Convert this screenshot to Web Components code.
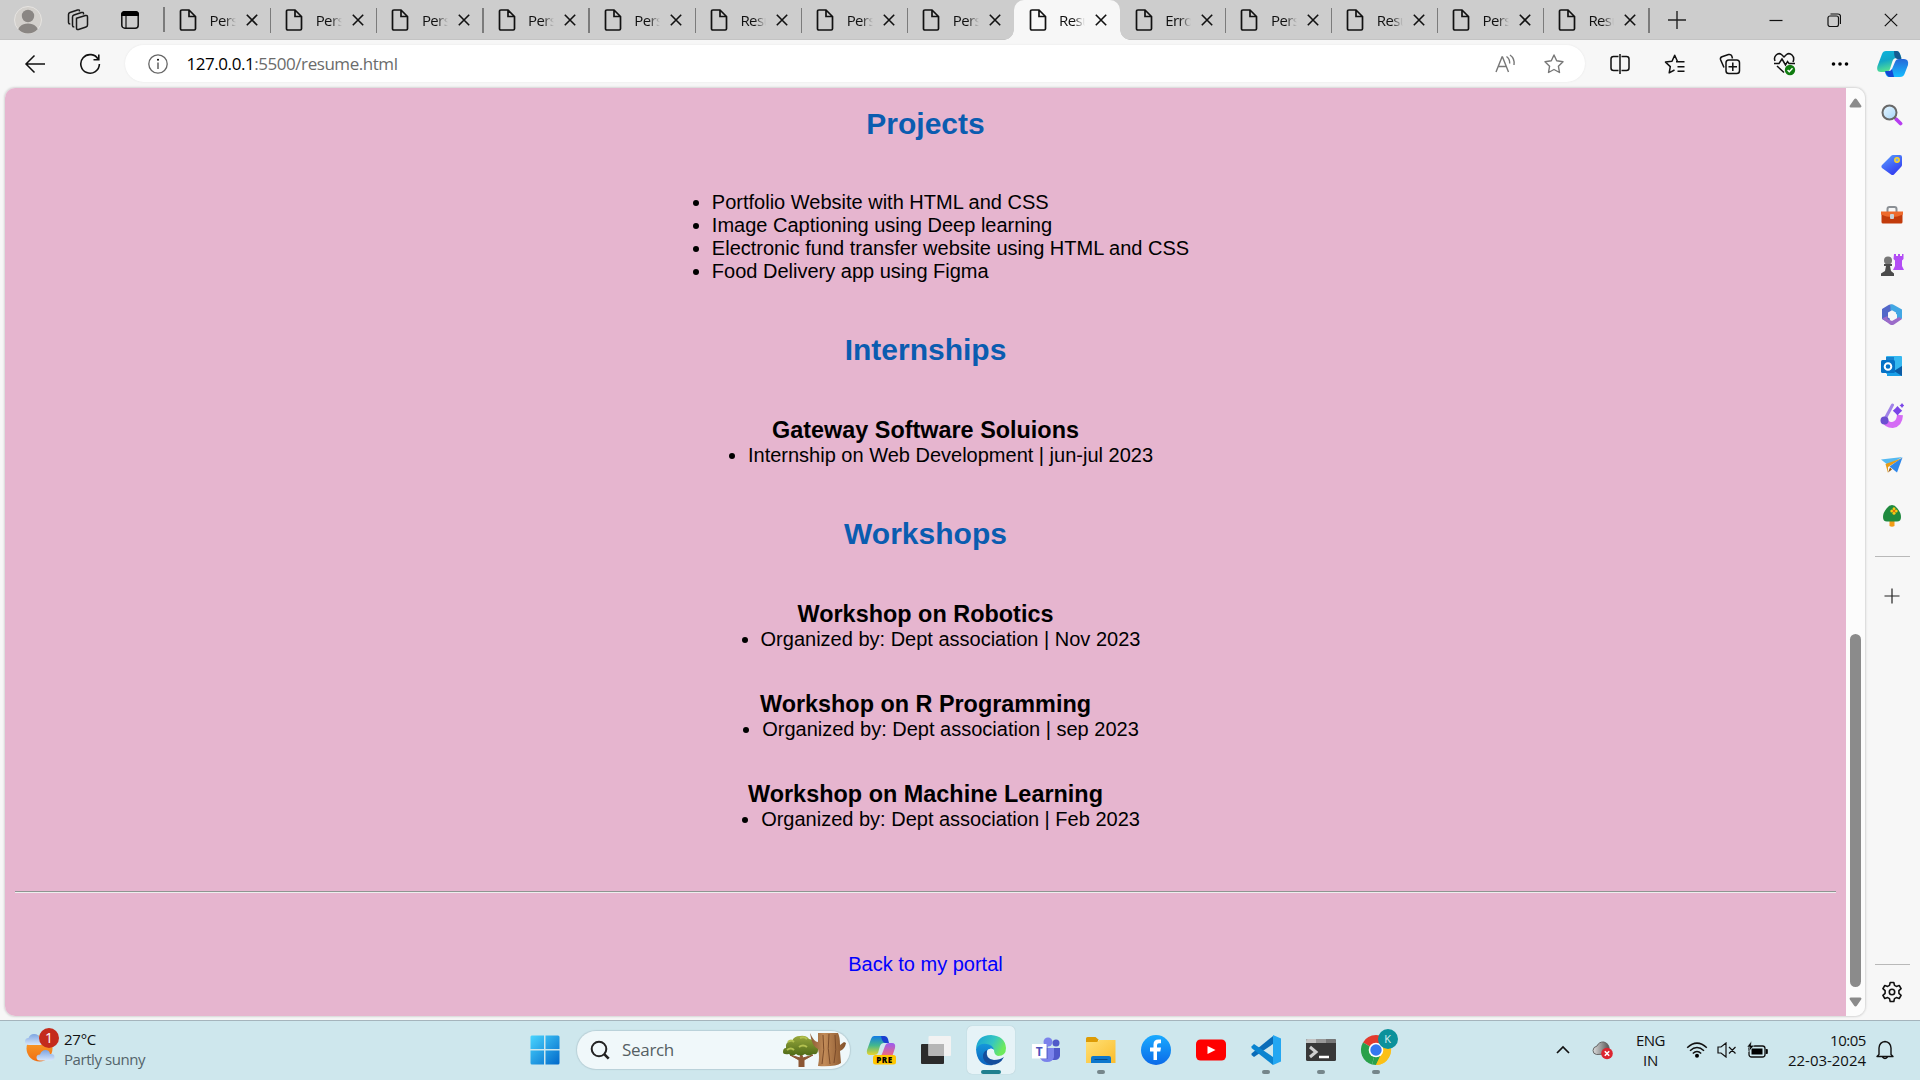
<!DOCTYPE html>
<html lang="en">
<head>
<meta charset="utf-8">
<title>Resume</title>
<style>
html,body{margin:0;height:100%;overflow:hidden}
body{font-family:"Open Sans","Noto Sans",sans-serif;background:#f7f7f7}
</style>
</head>
<body>
<desktop-screen></desktop-screen>
<script>
const ICONS = {
doc:[20,22,'<path d="M4 1.5h7.5L18 8v12.2c0 .8-.6 1.3-1.3 1.3H4.300c-.8 0-1.300-.6-1.300-1.300V2.800C3 2 3.500 1.500 4.300 1.500M11.500 1.500V8H18" transform="translate(-.5 -.5)" fill="none" stroke="#111" stroke-width="1.700"/>'],
x:[12,12,'<path d="M.8.8l10.400 10.400M11.200.8.8 11.200" stroke="#111" stroke-width="1.600"/>'],
person:[28,28,'<defs><clipPath id="c"><circle cx="14" cy="14" r="13.500"/></clipPath></defs><circle cx="14" cy="14" r="13.500" fill="#d3d0cc" stroke="#e6e4e1"/><g clip-path="url(#c)" fill="#8a8683"><circle cx="14" cy="10" r="6.200"/><path d="M3.500 28c0-7 4-10.500 10.500-10.500S24.500 21 24.500 28z"/></g>'],
spaces:[24,24,'<g fill="none" stroke="#1a1a1a" stroke-width="1.500" stroke-linejoin="round"><path d="M10.500 10.200 19.500 7.500q2-.5 2 1.500v8q0 1.500-1.500 2l-7.500 2.500q-2 .5-2-1.500z"/><path d="M17.500 6.500V5.500q0-1.500-2-1L8 7Q6.500 7.500 6.500 9v8.500q0 1.500 1.800 1.500"/><path d="M13.500 3.500V3q0-1.500-2-1L4 4.500Q2.500 5 2.500 6.500v8q0 1.500 1.800 1.500"/></g>'],
tabact:[20,20,'<rect x="1.800" y="1.800" width="16.400" height="16.400" rx="3" fill="none" stroke="#111" stroke-width="1.500"/><path d="M1 6V4.500Q1 1 4.500 1h11Q19 1 19 4.500V6z"/><path d="M6 6v12" stroke="#111" stroke-width="1.200"/>'],
back:[22,20,'<path d="M21 10H2M10.500 1.500 2 10l8.500 8.500" fill="none" stroke="#111" stroke-width="1.500"/>'],
reload:[22,22,'<path d="M19.300 6.500A9.300 9.300 0 1 0 20.400 11M19.800 1.500v5.300h-5.300" fill="none" stroke="#111" stroke-width="1.600"/>'],
info:[22,22,'<circle cx="11" cy="11" r="9.200" fill="none" stroke="#666" stroke-width="1.300"/><path d="M11 9.500V16" stroke="#555" stroke-width="1.400"/><circle cx="11" cy="6.700" r="1"/>'],
read:[22,20,'<g fill="none" stroke="#777" stroke-width="1.400"><path d="M2 18 8 3h.5l6 15M4.200 12.500h8M12.500 2.500q3.500 2.500 3.200 7M16 1q5 3.500 4 10"/></g>'],
star:[22,21,'<path d="m11 2 2.700 5.800 6.300.9-4.600 4.500 1.100 6.300L11 16.500l-5.500 3 1.100-6.300L2 8.700l6.300-.9z" fill="none" stroke="#777" stroke-width="1.400" stroke-linejoin="round"/>'],
split:[20,22,'<g fill="none" stroke="#111" stroke-width="1.500"><path d="M8.500 3.500H3.500q-2.500 0-2.500 2.500v9q0 2.500 2.500 2.500h5M11.500 3.500h5Q19 3.500 19 6v9q0 2.500-2.500 2.500h-5M10 1v20"/></g>'],
favs:[22,22,'<path d="M10.500 17 5.200 19.800l1.100-6.200L1.500 9.100 8 8.200l2.700-6 2.700 6M20.500 8.700H12M20.500 13.700h-7M20.500 18.200h-7" fill="none" stroke="#111" stroke-width="1.500" stroke-linejoin="round"/>'],
coll:[22,22,'<g fill="none" stroke="#111" stroke-width="1.500"><path d="M5 14.500 1.500 6.500Q1 4.500 3 3.700L9.500 1.500Q12 1 12.800 3L13.500 5.500"/><rect x="7" y="7" width="13.500" height="13.500" rx="2.800"/><path d="M13.800 9.500v8.500M9.500 13.800h8.500"/></g>'],
heart:[24,24,'<path d="M2 9C0 4 5 0 8.500 2.500L11 5l2.500-2.500C17 0 22.500 4 20 10M1 11.500h5L9 7l3.500 6 2-3.500 1.500 2h6M4 14l7 6.500" fill="none" stroke="#111" stroke-width="1.500"/><circle cx="17" cy="18" r="5.200" fill="#107c10"/><path d="m14.600 18 1.700 1.800 3.200-3.600" fill="none" stroke="#fff" stroke-width="1.400"/>'],
dots:[18,6,'<circle cx="2.500" cy="3" r="1.800"/><circle cx="9" cy="3" r="1.800"/><circle cx="15.500" cy="3" r="1.800"/>'],
copilot:[32,28,'<defs><linearGradient id="a" x2=".3" y2="1"><stop stop-color="#0cb5dd"/><stop offset=".5" stop-color="#12a6c8"/><stop offset="1" stop-color="#58e490"/></linearGradient><linearGradient id="b" x2="0" y2="1"><stop stop-color="#2668d8"/><stop offset="1" stop-color="#17bdff"/></linearGradient></defs><path d="M9 1h10q3 0 4 3l1.500 4h-5q-3 0-4 3l-2.500 8q-1 3-4 3H4q-5 0-3.500-6L5 4q1-3 4-3" fill="url(#a)"/><path d="M17 1h3q2 0 3 3l1.500 5h-4Q17 9 17 1" fill="#155b91"/><path d="M23 27H12q-3 0-4-5h3q3 0 4-3l3-7q1-3 4-3h5q5 0 4 6l-3.500 9q-1 3-4.500 3" fill="url(#b)"/><path d="M8 21h4q2 0 3-2l2 8h-4q-3 0-5-6" fill="#1449d5"/>'],
min:[14,12,'<path d="M.5 6.500h13" stroke="#111" stroke-width="1.200"/>'],
max:[14,14,'<rect x="1" y="3" width="10.500" height="10.500" rx="2" fill="none" stroke="#111" stroke-width="1.200"/><path d="M3.500 1H11q2.500 0 2.500 2.500V11" fill="none" stroke="#111" stroke-width="1.200"/>'],
wx:[14,14,'<path d="m.8.800 12.400 12.400M13.200.8.8 13.200" stroke="#111" stroke-width="1.200"/>'],
plus:[18,18,'<path d="M9 0v18M0 9h18" stroke="#222" stroke-width="1.400"/>'],
plus2:[16,16,'<path d="M8 .5v15M.5 8h15" stroke="#222" stroke-width="1.200"/>'],
mag:[22,22,'<defs><linearGradient id="a" x2="1" y2="1"><stop stop-color="#e8f6ff"/><stop offset="1" stop-color="#a5d5f8"/></linearGradient></defs><path d="m13 13 3 3" stroke="#777" stroke-width="2.500"/><path d="m15.500 15.500 4 4" stroke="#b63df0" stroke-width="3.800" stroke-linecap="round"/><circle cx="8.500" cy="8.500" r="7" fill="url(#a)" stroke="#686868" stroke-width="2"/>'],
tag:[22,22,'<defs><linearGradient id="a" x2=".6" y2="1"><stop stop-color="#5aa2ff"/><stop offset="1" stop-color="#333cf0"/></linearGradient></defs><path d="M12 1h7q2 0 2 2v8q0 1-1 2l-7 7.500q-1.500 1.200-3 0L1 14q-1.200-1.500 0-3l9-9q1-1 2-1" fill="url(#a)"/><circle cx="16" cy="6" r="2.200" fill="#7aa9ee" stroke="#ffd51f" stroke-width="1.500"/>'],
box:[24,20,'<path d="M7.500 7V4q0-2 2-2h5q2 0 2 2v3" fill="none" stroke="#8a8f94" stroke-width="2"/><rect x="1.500" y="7" width="21" height="11.500" rx="1.500" fill="#c23b0b"/><path d="M1 6.500h22v3q-11 5-22 0z" fill="#ee6a2c"/><rect x="10" y="9" width="4" height="5" rx="1" fill="#c7d2d8"/>'],
chess:[24,24,'<path d="M14 1h2v2h2V1h2v2h2V1h1.500v5L22 7.500V13l2 4H13l2-4V7.500L13.500 6z" fill="#b34df5"/><circle cx="8" cy="7.500" r="4" fill="#777"/><path d="M4 11h8v2h-2l1 5 3 2.500V23H1v-2.500L5 18l1-5H4z" fill="#4b4b4b"/>'],
m365:[22,24,'<path d="M8 1.800 1 6v10l5 3 3-2.500V9l7-4-4-2.800Q10 .8 8 1.800" fill="#5267c9"/><path d="M9 2q2-1.500 4 0l8 4.500v9l-5 3v-7L9.500 7.500V4" fill="#42a7e4"/><path d="M1 15.500 6.500 13v3l4.500 2 7-4 3 2-8 5.500q-2 1.200-4 0z" fill="#9b6bc9"/><path d="m7 9.500 4-2.200 4 2.200v5L11 17l-4-2.500z" fill="#f7f7f7"/>'],
outlook:[22,22,'<rect x="5" y="1" width="16" height="18" rx="1" fill="#35b8f1"/><path d="M5 2h8v7H5z" fill="#1582cf"/><path d="m21 11-7 4.500L6 12v9h15z" fill="#1aa0e8"/><path d="m21 11-8 5 8 5z" fill="#0b5ba5"/><rect x="0" y="5" width="14" height="13" rx="1.500" fill="#0672c6"/><circle cx="7" cy="11.500" r="3.300" fill="none" stroke="#fff" stroke-width="2"/>'],
paint:[24,26,'<path d="M4.500 17q2 5 8 5 7-1 7.500-10" fill="none" stroke="#d56cf5" stroke-width="6"/><path d="m12.500 2-7 13" stroke="#a183e8" stroke-width="3" stroke-linecap="round"/><circle cx="4.500" cy="17.500" r="4" fill="#6c4fd0"/><path d="m17.500 3 2.200 2.500 2.500 2.200-2.500 2.200-2.200 2.500-2.200-2.500-2.500-2.200 2.500-2.200zM22 0l1 1.500 1.500 1L23 3.500 22 5l-1-1.500-1.500-1 1.500-1z" fill="#7a45e8"/>'],
plane:[22,18,'<path d="M0 2.500 21.500 0 7 8z" fill="#54b9f1"/><path d="M4.500 7 21.500 1 7 10v6z" fill="#e79c16"/><path d="m8.500 9.500 13-9L16 15.500z" fill="#2e87ea"/><path d="m7 15.500 2-5 2 2z" fill="#9a5c12"/>'],
tree:[20,24,'<path d="M7.500 15h5v7q-2.500 1.500-5 0z" fill="#f29c16"/><path d="M10 1Q13 1 15 4q4 4.500 4 9 0 4.500-4 4.500H5q-4 0-4-4.500Q1 8.500 5 4 7 1 10 1" fill="#1f8a3e"/><g fill="#fcc814"><circle cx="12" cy="4.800" r="1.500"/><circle cx="12" cy="9.200" r="1.500"/><circle cx="9.800" cy="7" r="1.500"/><circle cx="14.200" cy="7" r="1.500"/></g><circle cx="12" cy="7" r="1.300" fill="#e0700f"/>'],
gear:[22,22,'<g fill="none" stroke="#111" stroke-width="1.600" stroke-linejoin="round"><path d="M9.200 1.500h3.600l.7 2.900 1.800 1 2.900-.9 1.900 3.200-2.200 2v2.600l2.200 2-1.900 3.200-2.900-.9-1.800 1-.7 2.900H9.200l-.7-2.900-1.800-1-2.900.9-1.900-3.200 2.200-2V9.700l-2.200-2 1.900-3.200 2.900.9 1.800-1z"/><circle cx="11" cy="11" r="2.700"/></g>'],
up:[13,10,'<path d="M6.500.5q.8 0 1.300.8l4.500 6.500q.7 1.700-1 1.700H1.700q-1.700 0-1-1.700l4.500-6.500q.5-.8 1.300-.8" fill="#8b8b8b"/>'],
down:[13,10,'<path d="M6.500 9.500q.8 0 1.300-.8l4.500-6.500q.7-1.700-1-1.700H1.700q-1.700 0-1 1.700l4.500 6.500q.5.800 1.300.8" fill="#8b8b8b"/>'],
weather:[32,32,'<defs><linearGradient id="a" x2="0" y2="1"><stop stop-color="#fba72d"/><stop offset="1" stop-color="#f06f14"/></linearGradient><linearGradient id="b" x2="0" y2="1"><stop stop-color="#7da5e2"/><stop offset="1" stop-color="#d7e6fb"/></linearGradient></defs><circle cx="15.500" cy="16.500" r="13" fill="url(#a)"/><path d="M5 13Q1 13 1 9.500 1 6 4.500 6 6 2 10 2q5 0 6 5 3 0 3 3t-3 3z" fill="url(#b)"/><path d="M16 28.500q-3.500 0-3.500-3t3.500-3q1.500-4.500 5.500-4.500T26 22q4.500-.5 4.500 3t-4 3.500z" fill="url(#b)"/>'],
win:[30,30,'<defs><linearGradient id="a" gradientUnits="userSpaceOnUse" x2="30" y2="30"><stop stop-color="#4ad6ff"/><stop offset="1" stop-color="#0067c9"/></linearGradient></defs><path d="M1.500.5H14V14H.5V1.500zM15.500.5H28q1.500 0 1.500 1.500v12h-14zM.5 15.500H14v14H2Q.5 29.500.5 28zM15.500 15.500h14V28q0 1.500-1.500 1.500H15.500z" fill="url(#a)"/>'],
search:[20,20,'<circle cx="9" cy="9" r="7.300" fill="none" stroke="#222" stroke-width="2"/><path d="m14.200 14.200 4.500 4.500" stroke="#222" stroke-width="2.600"/>'],
trees:[64,34,'<defs><linearGradient id="a" x2="1" y2="0"><stop stop-color="#8a5a34"/><stop offset=".4" stop-color="#c28b58"/><stop offset="1" stop-color="#825029"/></linearGradient><linearGradient id="b" x2="0" y2="1"><stop stop-color="#98a83c"/><stop offset="1" stop-color="#4e6a18"/></linearGradient></defs><path d="m8 22 9 5v7h5v-7l9-5-10 3-2-5-1 5z" fill="#8c5735" stroke="#8c5735"/><path d="M1 19q0-4 3-4-1-7 6-7 2-5 8-5 6-1 9 3 5 0 6 6 4 1 3 5 0 5-5 4-4 3-8 0-5 3-9 0-4 3-7 0-6 1-6-2" fill="url(#b)"/><path d="M6 9q3-3 6 0M18 5q4-2 7 1M5 17q4-3 7 0M17 14q4-3 8 0" stroke="#b3c150" stroke-width="2" fill="none"/><path d="M36 0h20q2 4 2 12l4-3 2 1q-1 6-6 8l1 12q-5 4-23 3 2-10 0-17-6-2-8-16 4 9 8 9z" fill="url(#a)"/><path d="M41 2q2 15-1 29M47 1q-2 14 1 30M53 2q2 15-1 28" stroke="#7c4c2a" fill="none"/>'],
pre:[32,32,'<defs><linearGradient id="a" x2="0" y2="1"><stop stop-color="#127be5"/><stop offset=".5" stop-color="#44b88d"/><stop offset="1" stop-color="#ead52a"/></linearGradient><linearGradient id="b" x2="0" y2="1"><stop stop-color="#9a5cf2"/><stop offset="1" stop-color="#fa6a70"/></linearGradient></defs><path d="M9 2h9q3 0 3 3l1 4h-3q-3 0-4 3l-2 7q-1 2-4 2H5q-4 0-3-5L6 5q1-3 3-3" fill="url(#a)"/><path d="M16 2h3q3 0 4 3l1 4h-4q-3-1-4-7" fill="#1a3fd0"/><path d="M20 9h7q4 0 3 5l-3 9H14q2 0 3-3l3-8q1-3 4-3" fill="url(#b)"/><rect x="8" y="21" width="23" height="9.500" rx="2.500" fill="#ffc600"/><text x="19.500" y="28.800" text-anchor="middle" font-size="8" letter-spacing=".5" font-family="Open Sans" font-weight="800">PRE</text>'],
task:[32,30,'<rect x="1" y="9" width="23" height="20" rx="1" fill="#2b2b2b"/><rect x="8.500" y="1" width="22.500" height="20" rx="1" fill="#f2f2f2"/><path d="M8.500 9H24v12H8.500z" fill="#b6b6b6"/>'],
edge:[32,32,'<defs><linearGradient id="a" x2="1" y2=".4"><stop stop-color="#159fd8"/><stop offset=".6" stop-color="#35c6c1"/><stop offset="1" stop-color="#6dea5c"/></linearGradient><linearGradient id="b" x2="0" y2="1"><stop stop-color="#1597da"/><stop offset="1" stop-color="#0a62bf"/></linearGradient></defs><path d="M1 15Q2 1 16 1q14 1 15 13 0 8-8 8-6 0-5-3 2-7-5-8Q6 10 1 15" fill="url(#a)"/><path d="M1 15q3-6 11-5 6 1 7 6-4-3-7 1-2 6 4 11l2 3Q2 33 1 15" fill="url(#b)"/><path d="M12 16q-2 9 7 10 6 0 10-3-4 8-13 8-9-3-8-10 1-4 4-5" fill="#134d9c"/><path d="M12.500 16q4-3 6.500 0 0 5 4 6-9 2-10.500-6" fill="#e9f6fa"/>'],
teams:[30,28,'<circle cx="17" cy="6" r="4.500" fill="#7b83eb"/><circle cx="25" cy="7" r="3.500" fill="#5059c9"/><path d="M21 12h8v8q-1 4-5 4h-3z" fill="#5059c9"/><path d="M9 12h14v9q-1 5-7 5t-7-5z" fill="#7b83eb"/><path d="M9 10h8v13H9z" fill="#4b53bc" opacity=".5"/><rect x="1" y="8" width="14.500" height="14.500" fill="#fff"/><text x="8.200" y="19.500" text-anchor="middle" font-size="12" font-weight="700" font-family="Open Sans" fill="#4b53bc">T</text>'],
folder:[32,28,'<defs><linearGradient id="a" x2="1" y2="1"><stop stop-color="#ffe076"/><stop offset="1" stop-color="#fbbd2c"/></linearGradient></defs><path d="M1 2.500Q1 1 2.500 1h8L14 4h-1v3H1z" fill="#dd9b05"/><path d="M1 6h11l2-2h16.500v23H1z" fill="url(#a)"/><path d="M6 27v-5q0-2 2-2h16q2 0 2 2v5z" fill="#0d77cc"/><path d="M9.500 23.500h13" stroke="#064b8b"/>'],
fb:[32,32,'<defs><linearGradient id="a" x2="0" y2="1"><stop stop-color="#19aaff"/><stop offset="1" stop-color="#0b6ae8"/></linearGradient></defs><circle cx="16" cy="16" r="15" fill="url(#a)"/><path d="M13.500 26V17.500H10v-4h3.500v-3Q13.500 5.500 18.500 5.500H21v3.700h-2q-2 0-2 2v2.300h4l-.7 4H17V26z" fill="#fff"/>'],
yt:[32,24,'<rect x="1" y="1.500" width="30" height="21" rx="4.500" fill="#f00"/><path d="m12.500 8 8 4-8 4z" fill="#fff"/>'],
code:[32,32,'<path d="M1.500 19.500 23 2v8L4 23 1.500 21z" fill="#0a6cb8"/><path d="M1.500 12.500 4 10l19 13v8L1.500 14z" fill="#0a84d0"/><path d="m23 1 8 3.500v23L23 31z" fill="#23a7f2"/>'],
term:[32,24,'<rect x="1" y="1" width="30" height="22" rx="1.500" fill="#383838"/><path d="M1 5V2.500Q1 1 2.500 1H11v4z" fill="#c3c3c3"/><path d="M11 1h10v4H11z" fill="#999"/><path d="M21 1h8.500Q31 1 31 2.500V5H21z" fill="#777"/><path d="m5 9 6 5-6 5" fill="none" stroke="#d0d0d0" stroke-width="3"/><path d="M14 19h10" stroke="#fff" stroke-width="2.500"/>'],
chrome:[32,32,'<path d="M16 16 3 8.500A15 15 0 0 1 29 8.500z" fill="#e33b2e"/><path d="M16 16 29 8.500A15 15 0 0 1 16 31z" fill="#fbc016"/><path d="M16 16v0l-4 14.500A15 15 0 0 1 3 8.500z" fill="#28a14b"/><path d="m16 16 5 5-5 10-4-.5z" fill="#28a14b"/><path d="m16 31 5.500-12L29 9q5 12-5 19.700Q20 31 16 31" fill="#fbc016"/><circle cx="16" cy="16" r="7.300" fill="#fff"/><circle cx="16" cy="16" r="5.700" fill="#3478f0"/>'],
chev:[14,10,'<path d="m1 8 6-6 6 6" fill="none" stroke="#111" stroke-width="1.700"/>'],
cloud:[22,20,'<defs><linearGradient id="a" x2="1" y2="0"><stop stop-color="#ddd"/><stop offset="1" stop-color="#555"/></linearGradient></defs><path d="M4.500 14.500Q1 14 1 10.500 1 7 5 6q2-4.500 7-4 4 1 5 5v7z" fill="url(#a)" stroke="#666"/><circle cx="15" cy="13.500" r="5.800" fill="#dc2530"/><path d="m12.800 11.300 4.400 4.400M17.200 11.300l-4.400 4.400" stroke="#fff" stroke-width="1.600"/>'],
wifi:[22,18,'<g fill="none" stroke="#111" stroke-width="1.500"><path d="M1.200 6.700Q11-2.500 20.800 6.700M4 9.700q7-6.500 14 0M6.800 12.500q4.200-4 8.400 0"/></g><circle cx="11" cy="14.800" r="2"/>'],
vol:[20,16,'<path d="M1 5h3l5-4v14l-5-4H1zM12 5l6.500 6.500M18.500 5 12 11.500" fill="none" stroke="#111" stroke-width="1.200"/>'],
bat:[22,18,'<rect x="2" y="5" width="16" height="11" rx="2.500" fill="none" stroke="#111" stroke-width="1.300"/><path d="M4.500 7.500h11v6h-11z"/><path d="M18.800 8.500h1.500v4h-1.500" stroke="#111"/><path d="M4.500 0 0 6h3l-1.500 5L7 4.500H4z" stroke="#cee7ed" stroke-width=".5"/>'],
bell:[18,20,'<path d="M3 14.500V8Q3.500 2 9 1.500 14.500 2 15 8v6.500l2 2H1zM6.500 17q2.500 3 5 0" fill="none" stroke="#111" stroke-width="1.400" stroke-linejoin="round"/>']
};

class SvgIcon extends HTMLElement {
  connectedCallback() {
    const [w, h, body] = ICONS[this.getAttribute('name')];
    const W = +(this.getAttribute('w') || w), H = h * W / w;
    this.attachShadow({mode:'open'}).innerHTML =
      `<style>:host{display:block;flex:none;width:${W}px;height:${H}px}svg{display:block}</style><svg width="${W}" height="${H}" viewBox="0 0 ${w} ${h}">${body}</svg>`;
  }
}

/* A line of text whose tracking is adjusted so that it fills a given width. */
class FitText extends HTMLElement {
  connectedCallback() {
    this.attachShadow({mode:'open'}).innerHTML =
      `<style>:host{display:block;white-space:nowrap}span{display:inline-block}</style><span><slot></slot></span>`;
    const s = this.shadowRoot.querySelector('span');
    const target = +this.getAttribute('w'), n = this.textContent.length;
    if (target) s.style.letterSpacing = ((target - s.getBoundingClientRect().width) / n) + 'px';
  }
}

class BrowserTab extends HTMLElement {
  connectedCallback() {
    this.attachShadow({mode:'open'}).innerHTML = `<style>
    :host{display:flex;box-sizing:border-box;height:40px;align-items:center;padding-left:13.500px;position:relative;font-size:15px;color:#111}
    :host([active]){background:#f7f7f7;border-radius:10px 10px 0 0}
    :host([active])::before,:host([active])::after{content:"";position:absolute;bottom:0;width:10px;height:10px}
    :host([active])::before{left:-10px;background:radial-gradient(circle at 0 0,transparent 9.500px,#f7f7f7 10px)}
    :host([active])::after{right:-10px;background:radial-gradient(circle at 100% 0,transparent 9.500px,#f7f7f7 10px)}
    .t{width:26px;overflow:hidden;white-space:nowrap;margin:0 10px 0 11.500px;letter-spacing:-.6px;line-height:22px;-webkit-mask-image:linear-gradient(90deg,#000 55%,transparent 100%)}
    i{position:absolute;right:-.500px;top:8px;width:1.300px;height:25px;background:#7b7b7b}
    </style><svg-icon name="doc"></svg-icon><div class="t"><slot></slot></div><svg-icon name="x"></svg-icon>${this.hasAttribute('sep')?'<i></i>':''}`;
  }
}

class TabStrip extends HTMLElement {
  connectedCallback() {
    const t = ['Personal','Personal','Personal','Personal','Personal','Resume','Personal','Personal','Resume','Error','Personal','Resume','Personal','Resume'];
    this.attachShadow({mode:'open'}).innerHTML = `<style>
    :host{display:flex;height:40px;background:#cdcdcd;align-items:center;box-shadow:inset 0 -1px #c3c3c3}
    .lead{display:flex;align-items:center;width:164.500px;box-sizing:border-box;padding-left:14px;position:relative}
    .lead i{position:absolute;right:0;top:1px;width:1.300px;height:25px;background:#7b7b7b}
    .a{width:106.200px}.b{width:105.800px}.win{display:flex;align-items:center;margin-left:auto;padding-right:22px;gap:43.500px}
    </style><div class="lead"><svg-icon name="person"></svg-icon><svg-icon name="spaces" style="margin-left:24px"></svg-icon><svg-icon name="tabact" style="margin-left:30px"></svg-icon><i></i></div>`
    + t.map((s,i)=>`<browser-tab class="${i<9?'a':'b'}" ${i===8?'active':''} ${i===7||i===8?'':'sep'}>${s}</browser-tab>`).join('')
    + `<svg-icon name="plus" style="margin-left:18.500px"></svg-icon><div class="win"><svg-icon name="min"></svg-icon><svg-icon name="max"></svg-icon><svg-icon name="wx"></svg-icon></div>`;
  }
}

class AddressRow extends HTMLElement {
  connectedCallback() {
    this.attachShadow({mode:'open'}).innerHTML = `<style>
    :host{display:flex;height:48px;background:#f7f7f7;align-items:center;box-sizing:border-box;padding:0 0 0 24px}
    .bar{display:flex;flex:none;align-items:center;box-sizing:border-box;width:1460px;height:37px;border-radius:19px;background:#fff;margin:0 0 1px 24px;padding:0 20px 0 21.500px;box-shadow:0 0 2px #e4e4e4}
    fit-text{font-size:17px;margin:-1px 0 0 18px;color:#6b6b6b}b{font-weight:400;color:#000}
    .r{display:grid;grid-template-columns:repeat(5,55px) 52px;place-items:center;margin-left:7px}
    </style><svg-icon name="back"></svg-icon><svg-icon name="reload" style="margin-left:33px"></svg-icon>
    <div class="bar"><svg-icon name="info"></svg-icon><fit-text w="211"><b>127.0.0.1</b>:5500/resume.html</fit-text><svg-icon name="read" style="margin-left:auto"></svg-icon><svg-icon name="star" style="margin-left:27px"></svg-icon></div>
    <div class="r"><svg-icon name="split"></svg-icon><svg-icon name="favs"></svg-icon><svg-icon name="coll"></svg-icon><svg-icon name="heart"></svg-icon><svg-icon name="dots"></svg-icon><svg-icon name="copilot"></svg-icon></div>`;
  }
}

class ResumePage extends HTMLElement {
  connectedCallback() {
    this.attachShadow({mode:'open'}).innerHTML = `<style>
    :host{display:flex;flex-direction:column;align-items:center;background:#e6b5cf;width:1841px;height:928px;font-family:"Liberation Sans",Arial,sans-serif;color:#000;font-size:20px;line-height:23px}
    h2{margin:0;font-size:30px;line-height:34px;color:#0a5cb0}
    h3{margin:0;font-size:23.400px;line-height:27px}
    ul{margin:0;padding:0 0 0 50px}
    hr{box-sizing:border-box;width:1821px;height:2px;margin:60px 0 0;border:0;border-top:1px solid #8f9492;border-bottom:1px solid #eeeeee}
    a{color:#00f;margin-top:60px}
    </style>
    <h2 style="margin-top:19px">Projects</h2>
    <ul style="margin-top:50px"><li>Portfolio Website with HTML and CSS</li><li>Image Captioning using Deep learning</li><li>Electronic fund transfer website using HTML and CSS</li><li>Food Delivery app using Figma</li></ul>
    <h2 style="margin-top:50px">Internships</h2>
    <h3 style="margin-top:50px"><fit-text w="307">Gateway Software Soluions</fit-text></h3><ul><li>Internship on Web Development | jun-jul 2023</li></ul>
    <h2 style="margin-top:50px">Workshops</h2>
    <h3 style="margin-top:50px"><fit-text w="256">Workshop on Robotics</fit-text></h3><ul><li>Organized by: Dept association | Nov 2023</li></ul>
    <h3 style="margin-top:40px"><fit-text w="331">Workshop on R Programming</fit-text></h3><ul><li>Organized by: Dept association | sep 2023</li></ul>
    <h3 style="margin-top:40px"><fit-text w="355">Workshop on Machine Learning</fit-text></h3><ul><li>Organized by: Dept association | Feb 2023</li></ul>
    <hr><a>Back to my portal</a>`;
  }
}

class ScrollBar extends HTMLElement {
  connectedCallback() {
    this.attachShadow({mode:'open'}).innerHTML = `<style>
    :host{display:flex;flex-direction:column;align-items:center;box-sizing:border-box;width:19px;height:928px;background:#fcfcfc;padding:10px 0 9px}
    i{width:11px;height:353px;border-radius:6px;background:#8b8b8b;margin:auto 0 10px}
    </style><svg-icon name="up"></svg-icon><i></i><svg-icon name="down"></svg-icon>`;
  }
}

class SideBar extends HTMLElement {
  connectedCallback() {
    this.attachShadow({mode:'open'}).innerHTML = `<style>
    :host{display:flex;flex-direction:column;align-items:center;box-sizing:border-box;width:55px;height:932px;padding-top:2px}
    .c{height:50.100px;display:grid;place-items:center;flex:none;padding-right:2px}
    i{width:35px;height:1px;background:#b9b9b9;flex:none}
    </style>` + ['mag','tag','box','chess','m365','outlook','paint','plane','tree'].map(n=>`<div class="c"><svg-icon name="${n}"></svg-icon></div>`).join('')
    + `<i style="margin-top:15px"></i><svg-icon name="plus2" style="margin:31px 2px 0 0"></svg-icon><i style="margin:auto 0 16px"></i><svg-icon name="gear" style="margin:0 1px 17px 0"></svg-icon>`;
  }
}

class TaskApp extends HTMLElement {
  connectedCallback() {
    const st = this.getAttribute('state');
    this.attachShadow({mode:'open'}).innerHTML = `<style>
    :host{display:grid;place-items:center;width:55px;height:48px;position:relative;flex:none}
    .bg{position:absolute;left:3.500px;top:0;width:48px;height:48px;border-radius:5px;background:#e6f3f7;box-shadow:0 0 1px #9fb8bf}
    svg-icon{position:relative}.bar{position:absolute;bottom:0;left:50%;transform:translateX(-50%);height:4px;border-radius:2px}
    .run{width:8px;background:#75868b}.active{width:20px;background:#20808f}
    .k{position:absolute;left:29px;top:3px;width:20px;height:20px;border-radius:50%;background:#0b919b;color:#d9f0f2;font-size:11px;line-height:20px;text-align:center}
    </style>${st==='active'?'<div class="bg"></div>':''}<svg-icon name="${this.getAttribute('icon')}"></svg-icon>${st?`<div class="bar ${st}"></div>`:''}${this.hasAttribute('badge')?`<div class="k">${this.getAttribute('badge')}</div>`:''}`;
  }
}

class TaskBar extends HTMLElement {
  connectedCallback() {
    this.attachShadow({mode:'open'}).innerHTML = `<style>
    :host{display:flex;align-items:flex-start;box-sizing:border-box;height:60px;border-top:1px solid #a5b4bc;background:#cee7ed;padding-top:5px;color:#111;font-size:15px;line-height:20px}
    .w{display:flex;width:517px;height:48px}.wi{position:relative;margin-left:24px;padding-top:6px}
    .wi b{position:absolute;left:15px;top:2px;width:20px;height:20px;border-radius:50%;background:#c42b1c;color:#fff;font:14px/20px "Open Sans";text-align:center}
    .wt{margin-left:8px;padding-top:3px}.wt fit-text+fit-text{color:#53636a}
    .s{display:flex;align-items:center;box-sizing:border-box;width:273px;height:38px;margin:5px 3.500px 0 5px;border-radius:19px;background:#f0f8fa;box-shadow:0 0 1px 1px #b9d0d7;padding:0 4px 0 13px;font-size:17px;color:#555f63}
    .tray{display:flex;align-items:center;height:48px;margin-left:auto;padding-right:26px}.c{text-align:center}.d{display:flex;flex-direction:column;align-items:flex-end}
    .c,.d{margin-top:-1px}
    </style>
    <div class="w"><div class="wi"><svg-icon name="weather"></svg-icon><b>1</b></div><div class="wt"><fit-text w="32">27°C</fit-text><fit-text w="81">Partly sunny</fit-text></div></div>
    <task-app icon="win"></task-app><div class="s"><svg-icon name="search"></svg-icon><fit-text w="52" style="margin-left:12px">Search</fit-text><svg-icon name="trees" style="margin-left:auto"></svg-icon></div>
    <task-app icon="pre"></task-app><task-app icon="task"></task-app><task-app icon="edge" state="active"></task-app><task-app icon="teams"></task-app><task-app icon="folder" state="run"></task-app><task-app icon="fb"></task-app><task-app icon="yt"></task-app><task-app icon="code" state="run"></task-app><task-app icon="term" state="run"></task-app><task-app icon="chrome" state="run" badge="K"></task-app>
    <div class="tray"><svg-icon name="chev"></svg-icon><svg-icon name="cloud" style="margin-left:22px"></svg-icon><div class="c" style="margin-left:22px"><fit-text w="29">ENG</fit-text><fit-text w="15">IN</fit-text></div><svg-icon name="wifi" style="margin-left:21px"></svg-icon><svg-icon name="vol" style="margin-left:9px"></svg-icon><svg-icon name="bat" style="margin-left:10px"></svg-icon><div class="d" style="margin-left:19px"><fit-text w="36">10:05</fit-text><fit-text w="78">22-03-2024</fit-text></div><svg-icon name="bell" style="margin-left:10px"></svg-icon></div>`;
  }
}

class DesktopScreen extends HTMLElement {
  connectedCallback() {
    this.attachShadow({mode:'open'}).innerHTML = `<style>
    :host{display:flex;flex-direction:column;width:1920px;height:1080px;overflow:hidden}
    .m{display:flex;height:932px;background:#f7f7f7;padding-left:5px}
    .v{display:flex;height:928px;border-radius:10px;overflow:hidden;box-shadow:0 0 2px 1px #d6d6d6}
    </style><tab-strip></tab-strip><address-row></address-row><div class="m"><div class="v"><resume-page></resume-page><scroll-bar></scroll-bar></div><side-bar></side-bar></div><task-bar></task-bar>`;
  }
}
for (const [n,c] of [['svg-icon',SvgIcon],['fit-text',FitText],['browser-tab',BrowserTab],['tab-strip',TabStrip],['address-row',AddressRow],['resume-page',ResumePage],['scroll-bar',ScrollBar],['side-bar',SideBar],['task-app',TaskApp],['task-bar',TaskBar],['desktop-screen',DesktopScreen]]) customElements.define(n,c);
</script>
</body>
</html>
